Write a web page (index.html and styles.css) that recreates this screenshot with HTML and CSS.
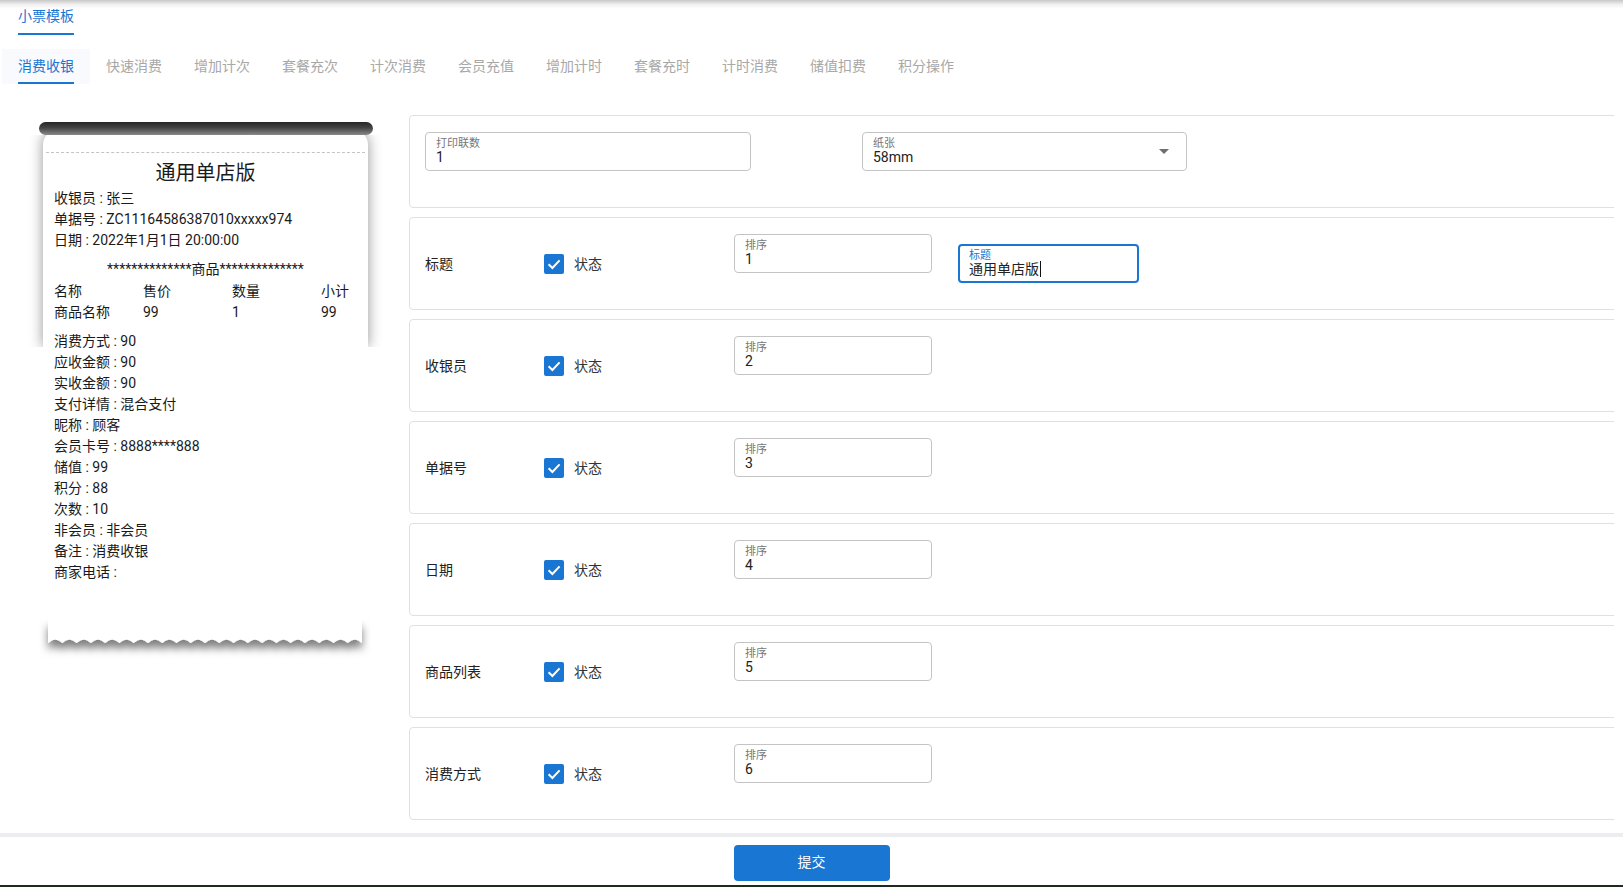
FILE: index.html
```html
<!DOCTYPE html>
<html lang="zh-CN">
<head>
<meta charset="utf-8">
<title>小票模板</title>
<link rel="stylesheet" href="styles.css">
</head>
<body>
<div class="top-shadow"></div>
<nav class="tabs tabs-main">
  <div class="tab active">小票模板</div>
</nav>
<nav class="tabs tabs-sub">
  <div class="tab active">消费收银</div>
  <div class="tab">快速消费</div>
  <div class="tab">增加计次</div>
  <div class="tab">套餐充次</div>
  <div class="tab">计次消费</div>
  <div class="tab">会员充值</div>
  <div class="tab">增加计时</div>
  <div class="tab">套餐充时</div>
  <div class="tab">计时消费</div>
  <div class="tab">储值扣费</div>
  <div class="tab">积分操作</div>
</nav>

<main class="content">
  <section class="preview">
    <div class="receipt">
      <div class="roller"></div>
      <div class="paper">
        <div class="dashed"></div>
        <div class="r-title">通用单店版</div>
        <div class="r-line">收银员 : 张三</div>
        <div class="r-line">单据号 : ZC11164586387010xxxxx974</div>
        <div class="r-line">日期 : 2022年1月1日 20:00:00</div>
        <div class="r-line r-stars">**************商品**************</div>
        <div class="r-table">
          <span>名称</span><span>售价</span><span>数量</span><span>小计</span>
          <span>商品名称</span><span>99</span><span>1</span><span>99</span>
        </div>
        <div class="r-group">
          <div class="r-line">消费方式 : 90</div>
          <div class="r-line">应收金额 : 90</div>
          <div class="r-line">实收金额 : 90</div>
          <div class="r-line">支付详情 : 混合支付</div>
          <div class="r-line">昵称 : 顾客</div>
          <div class="r-line">会员卡号 : 8888****888</div>
          <div class="r-line">储值 : 99</div>
          <div class="r-line">积分 : 88</div>
          <div class="r-line">次数 : 10</div>
          <div class="r-line">非会员 : 非会员</div>
          <div class="r-line">备注 : 消费收银</div>
          <div class="r-line">商家电话 :</div>
        </div>
      </div>
      <svg class="paper-end" width="332" height="48" viewBox="0 0 332 48">
        <defs>
          <filter id="endshadow" x="-10%" y="-30%" width="120%" height="220%">
            <feDropShadow dx="0" dy="7" stdDeviation="4" flood-color="#000" flood-opacity="0.5"/>
          </filter>
        </defs>
        <path filter="url(#endshadow)" fill="#fff" d="M9 0 H323 V23 q-7.14 -7 -14.27 0 q-7.14 -7 -14.27 0 q-7.14 -7 -14.27 0 q-7.14 -7 -14.27 0 q-7.14 -7 -14.27 0 q-7.14 -7 -14.27 0 q-7.14 -7 -14.27 0 q-7.14 -7 -14.27 0 q-7.14 -7 -14.27 0 q-7.14 -7 -14.27 0 q-7.14 -7 -14.27 0 q-7.14 -7 -14.27 0 q-7.14 -7 -14.27 0 q-7.14 -7 -14.27 0 q-7.14 -7 -14.27 0 q-7.14 -7 -14.27 0 q-7.14 -7 -14.27 0 q-7.14 -7 -14.27 0 q-7.14 -7 -14.27 0 q-7.14 -7 -14.27 0 q-7.14 -7 -14.27 0 q-7.14 -7 -14.27 0 Z"/>
      </svg>
    </div>
  </section>

  <section class="settings">
    <div class="card card-top">
      <div class="field field-count">
        <div class="field-body">
          <span class="field-label">打印联数</span>
          <span class="field-value">1</span>
        </div>
      </div>
      <div class="field field-paper">
        <div class="field-body">
          <span class="field-label">纸张</span>
          <span class="field-value">58mm</span>
        </div>
        <span class="select-arrow"></span>
      </div>
    </div>

    <div class="card card-row">
      <div class="row-name">标题</div>
      <div class="row-check">
        <svg class="checkbox" width="20" height="20" viewBox="0 0 20 20"><rect width="20" height="20" rx="2" fill="#1976d2"/><path d="M4.6 10.3 L8.4 14 L15.6 6.4" fill="none" stroke="#fff" stroke-width="2"/></svg>
        <span>状态</span>
      </div>
      <div class="field field-sort">
        <div class="field-body">
          <span class="field-label">排序</span>
          <span class="field-value">1</span>
        </div>
      </div>
      <div class="field field-title focused">
        <div class="field-body">
          <span class="field-label">标题</span>
          <span class="field-value">通用单店版<span class="caret"></span></span>
        </div>
      </div>
    </div>

    <div class="card card-row">
      <div class="row-name">收银员</div>
      <div class="row-check">
        <svg class="checkbox" width="20" height="20" viewBox="0 0 20 20"><rect width="20" height="20" rx="2" fill="#1976d2"/><path d="M4.6 10.3 L8.4 14 L15.6 6.4" fill="none" stroke="#fff" stroke-width="2"/></svg>
        <span>状态</span>
      </div>
      <div class="field field-sort">
        <div class="field-body">
          <span class="field-label">排序</span>
          <span class="field-value">2</span>
        </div>
      </div>
    </div>

    <div class="card card-row">
      <div class="row-name">单据号</div>
      <div class="row-check">
        <svg class="checkbox" width="20" height="20" viewBox="0 0 20 20"><rect width="20" height="20" rx="2" fill="#1976d2"/><path d="M4.6 10.3 L8.4 14 L15.6 6.4" fill="none" stroke="#fff" stroke-width="2"/></svg>
        <span>状态</span>
      </div>
      <div class="field field-sort">
        <div class="field-body">
          <span class="field-label">排序</span>
          <span class="field-value">3</span>
        </div>
      </div>
    </div>

    <div class="card card-row">
      <div class="row-name">日期</div>
      <div class="row-check">
        <svg class="checkbox" width="20" height="20" viewBox="0 0 20 20"><rect width="20" height="20" rx="2" fill="#1976d2"/><path d="M4.6 10.3 L8.4 14 L15.6 6.4" fill="none" stroke="#fff" stroke-width="2"/></svg>
        <span>状态</span>
      </div>
      <div class="field field-sort">
        <div class="field-body">
          <span class="field-label">排序</span>
          <span class="field-value">4</span>
        </div>
      </div>
    </div>

    <div class="card card-row">
      <div class="row-name">商品列表</div>
      <div class="row-check">
        <svg class="checkbox" width="20" height="20" viewBox="0 0 20 20"><rect width="20" height="20" rx="2" fill="#1976d2"/><path d="M4.6 10.3 L8.4 14 L15.6 6.4" fill="none" stroke="#fff" stroke-width="2"/></svg>
        <span>状态</span>
      </div>
      <div class="field field-sort">
        <div class="field-body">
          <span class="field-label">排序</span>
          <span class="field-value">5</span>
        </div>
      </div>
    </div>

    <div class="card card-row">
      <div class="row-name">消费方式</div>
      <div class="row-check">
        <svg class="checkbox" width="20" height="20" viewBox="0 0 20 20"><rect width="20" height="20" rx="2" fill="#1976d2"/><path d="M4.6 10.3 L8.4 14 L15.6 6.4" fill="none" stroke="#fff" stroke-width="2"/></svg>
        <span>状态</span>
      </div>
      <div class="field field-sort">
        <div class="field-body">
          <span class="field-label">排序</span>
          <span class="field-value">6</span>
        </div>
      </div>
    </div>
  </section>
</main>

<footer class="footer">
  <button class="submit" type="button">提交</button>
</footer>
</body>
</html>
```

FILE: styles.css
```css
* { box-sizing: border-box; }

html, body {
  margin: 0;
  padding: 0;
  height: 887px;
  overflow: hidden;
  background: #fff;
}

body {
  position: relative;
  font-family: Roboto, "Noto Sans CJK SC", "Noto Sans", sans-serif;
  font-size: 14px;
  color: #212121;
}

.top-shadow {
  position: absolute;
  top: 0;
  left: 0;
  right: 0;
  height: 9px;
  background: linear-gradient(rgba(0,0,0,0.22), rgba(0,0,0,0.06) 50%, rgba(0,0,0,0));
  pointer-events: none;
}

/* ---------- tabs ---------- */
.tabs {
  display: flex;
  margin-left: 2px;
}
.tabs-main { height: 35px; }
.tabs-sub { height: 35px; margin-top: 14px; }

.tab {
  position: relative;
  display: flex;
  align-items: center;
  padding: 0 16px;
  height: 35px;
  line-height: 20px;
  color: #a8a8a8;
  white-space: nowrap;
}
.tabs-main .tab { padding-bottom: 3px; }
.tabs-sub .tab { padding-bottom: 2px; }
.tab.active { color: #1976d2; }
.tabs-sub .tab.active { background: #f8fafd; }
.tab.active::after {
  content: "";
  position: absolute;
  left: 16px;
  right: 16px;
  bottom: 0;
  height: 2px;
  background: #1976d2;
}

/* ---------- content ---------- */
.content {
  display: flex;
  align-items: flex-start;
  padding: 31px 0 13px;
}

.preview {
  width: 409px;
  flex: none;
}

.receipt {
  margin: 7px 0 0 39px;
  width: 334px;
}

.roller {
  position: relative;
  z-index: 2;
  height: 13px;
  border-radius: 7px;
  background: linear-gradient(#262626, #444 45%, #8a8a8a);
}

.paper {
  position: relative;
  z-index: 0;
  margin: 0 5px 0 4px;
  padding: 17px 0 0;
  color: #1a1a1a;
}
.paper::before {
  content: "";
  position: absolute;
  left: 0;
  right: 0;
  top: -6px;
  height: 218px;
  background: #fff;
  border-radius: 16px 16px 0 0;
  box-shadow: 0 0 14px rgba(0,0,0,0.42);
  clip-path: inset(6px -24px 0 -24px);
  z-index: -1;
}

.dashed {
  margin: 0 3px;
  border-top: 1px dashed #c4c4c4;
}

.r-title {
  margin-top: 6px;
  margin-bottom: 1px;
  text-align: center;
  font-size: 20px;
  line-height: 28px;
}

.r-line {
  padding-left: 11px;
  line-height: 21px;
  white-space: nowrap;
}

.r-stars {
  margin-top: 8px;
  padding-left: 0;
  text-align: center;
  padding-right: 0;
}

.r-table {
  margin-top: 1px;
  padding-left: 11px;
  display: grid;
  grid-template-columns: repeat(4, 89px);
  line-height: 21px;
  white-space: nowrap;
}

.r-group { margin-top: 8px; }

.paper-end {
  display: block;
  margin: 37px 0 0 0;
}

/* ---------- settings ---------- */
.settings {
  flex: 1;
  min-width: 0;
  margin-right: 9px;
  overflow: hidden;
  display: flex;
  flex-direction: column;
  gap: 9px;
}

.card {
  height: 93px;
  margin-right: -12px;
  border: 1px solid #e0e0e0;
  border-radius: 4px;
  padding: 16px 15px;
  display: flex;
}

.card-top { align-items: flex-start; }
.card-row { align-items: center; }

.field {
  display: flex;
  align-items: center;
  height: 39px;
  border: 1px solid #c4c4c4;
  border-radius: 4px;
  padding: 5px 10px 0;
  background: #fff;
}
.field-body {
  flex: 1;
  display: flex;
  flex-direction: column;
  align-self: flex-start;
}
.field-label {
  font-size: 11px;
  line-height: 11px;
  color: #777;
}
.field-value {
  font-size: 14px;
  line-height: 16px;
  color: #222;
  white-space: nowrap;
}

.field-count { width: 326px; }
.field-paper { width: 325px; margin-left: 111px; }

.select-arrow {
  width: 0;
  height: 0;
  margin-right: 7px;
  margin-top: -5px;
  border-left: 5px solid transparent;
  border-right: 5px solid transparent;
  border-top: 5px solid #6e6e6e;
}

.row-name {
  width: 119px;
  flex: none;
  line-height: 20px;
  color: #222;
}

.row-check {
  width: 190px;
  flex: none;
  display: flex;
  align-items: center;
  gap: 10px;
  color: #333;
  line-height: 18px;
}
.checkbox { display: block; flex: none; }

.field-sort {
  width: 198px;
  flex: none;
  align-self: flex-start;
}

.field-title {
  width: 181px;
  flex: none;
  margin-left: 26px;
}
.field.focused {
  border: 2px solid #1976d2;
  padding: 4px 9px 0;
}
.field.focused .field-label { color: #1976d2; }
.field.focused .field-value { margin-top: 0; }

.caret {
  display: inline-block;
  width: 1px;
  height: 16px;
  margin-left: 1px;
  vertical-align: top;
  background: #111;
}

/* ---------- footer ---------- */
.footer {
  display: flex;
  justify-content: center;
  border-top: 4px solid #ebedf0;
  border-bottom: 2px solid #1d2a1d;
  padding: 8px 0 4px;
}

.submit {
  width: 156px;
  height: 36px;
  border: 0;
  border-radius: 4px;
  background: #1976d2;
  color: #fff;
  font-family: Roboto, "Noto Sans CJK SC", sans-serif;
  font-size: 14px;
  line-height: 16px;
  padding: 0 0 2px;
}
```
